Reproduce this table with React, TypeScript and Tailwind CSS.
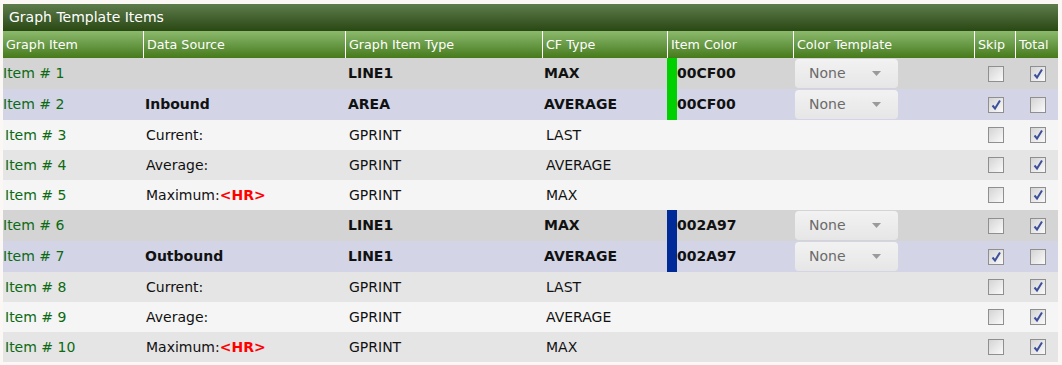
type Row = {
  n: number;
  ds: string;
  hr?: boolean;
  type: string;
  cf: string;
  color?: string;
  hex?: string;
  skip: boolean;
  total: boolean;
  bg: string;
  bold: boolean;
};

const rows: Row[] = [
  { n: 1, ds: "", type: "LINE1", cf: "MAX", color: "bg-[#00cf00]", hex: "00CF00", skip: false, total: true, bg: "bg-[#d4d4d4]", bold: true },
  { n: 2, ds: "Inbound", type: "AREA", cf: "AVERAGE", color: "bg-[#00cf00]", hex: "00CF00", skip: true, total: false, bg: "bg-[#d3d5e7]", bold: true },
  { n: 3, ds: "Current:", type: "GPRINT", cf: "LAST", skip: false, total: true, bg: "bg-[#f5f5f5]", bold: false },
  { n: 4, ds: "Average:", type: "GPRINT", cf: "AVERAGE", skip: false, total: true, bg: "bg-[#e5e5e5]", bold: false },
  { n: 5, ds: "Maximum:", hr: true, type: "GPRINT", cf: "MAX", skip: false, total: true, bg: "bg-[#f5f5f5]", bold: false },
  { n: 6, ds: "", type: "LINE1", cf: "MAX", color: "bg-[#002a97]", hex: "002A97", skip: false, total: true, bg: "bg-[#d4d4d4]", bold: true },
  { n: 7, ds: "Outbound", type: "LINE1", cf: "AVERAGE", color: "bg-[#002a97]", hex: "002A97", skip: true, total: false, bg: "bg-[#d3d5e7]", bold: true },
  { n: 8, ds: "Current:", type: "GPRINT", cf: "LAST", skip: false, total: true, bg: "bg-[#e5e5e5]", bold: false },
  { n: 9, ds: "Average:", type: "GPRINT", cf: "AVERAGE", skip: false, total: true, bg: "bg-[#f5f5f5]", bold: false },
  { n: 10, ds: "Maximum:", hr: true, type: "GPRINT", cf: "MAX", skip: false, total: true, bg: "bg-[#e5e5e5]", bold: false },
];

function Check({ on }: { on: boolean }) {
  return (
    <span className="flex h-4 w-4 items-center justify-center border border-[#8f8f8f] bg-gradient-to-br from-[#d4d4d4] to-[#fafafa]">
      {on && (
        <svg width="12" height="12" viewBox="0 0 12 12">
          <path d="M2.5 6.5 L5 9.5 L10 1.5" fill="none" stroke="#3d4f9a" strokeWidth="2" />
        </svg>
      )}
    </span>
  );
}

function Select() {
  return (
    <div className="ml-[2px] flex h-[29px] w-[103px] items-center justify-between rounded-[4px] bg-gradient-to-b from-[#f2f2f2] to-[#e6e6e6] pl-[14px] pr-[17px] text-[14px] text-[#6a6a6a]">
      <span>None</span>
      <svg width="9" height="5" viewBox="0 0 9 5">
        <path d="M0 0 H9 L4.5 5 Z" fill="#9a9a9a" />
      </svg>
    </div>
  );
}

const cols = "grid grid-cols-[140px_202px_197px_125px_126px_181px_41px_43px]";

export default function App() {
  return (
    <div className="min-h-[365px] bg-[#fbf7f5] px-[3px] pt-[4px] text-[14px] text-[#111]" style={{ fontFamily: '"DejaVu Sans", Verdana, sans-serif' }}>
      <div className="w-[1055px]">
        <div className="flex h-[27px] items-center bg-gradient-to-b from-[#5e7d4c] to-[#2a4812] pl-[6px] text-[14px] text-white">
          Graph Template Items
        </div>
        <div className={`${cols} h-[27px] bg-gradient-to-b from-[#8cba6d] to-[#467a18] text-[12.7px] text-white`}>
          {["Graph Item", "Data Source", "Graph Item Type", "CF Type", "Item Color", "Color Template", "Skip", "Total"].map((h, i) => (
            <div key={h} className={`flex items-center pl-[3px] ${i > 0 ? "border-l border-white" : ""}`}>
              {h}
            </div>
          ))}
        </div>
        {rows.map((r) => (
          <div key={r.n} className={`${cols} ${r.bg} ${r.bold ? "h-[31px] font-bold" : "h-[30px]"} items-center`}>
            <div className={`font-normal text-[#0b6a12] ${r.bold ? "pl-0" : "pl-[2px]"}`}>Item # {r.n}</div>
            <div className={r.bold ? "pl-[2px]" : "pl-[3px]"}>
              {r.ds}
              {r.hr && <span className="font-bold text-[#ff0000]">&lt;HR&gt;</span>}
            </div>
            <div className={r.bold ? "pl-[3px]" : "pl-[4px]"}>{r.type}</div>
            <div className={r.bold ? "pl-[2px]" : "pl-[4px]"}>{r.cf}</div>
            <div className="flex h-full items-center">
              {r.color && <span className={`h-full w-[10px] ${r.color}`} />}
              {r.hex}
            </div>
            <div className="flex items-center font-normal">{r.color && <Select />}</div>
            <div className="flex justify-center pl-[2px]"><Check on={r.skip} /></div>
            <div className="flex justify-center pl-[3px]"><Check on={r.total} /></div>
          </div>
        ))}
      </div>
    </div>
  );
}
